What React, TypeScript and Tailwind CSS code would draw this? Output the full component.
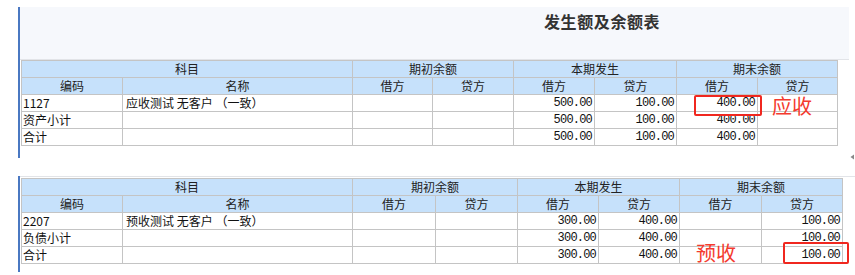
import React from "react";

const cn = "font-['Noto_Sans_CJK_SC',sans-serif]";
const mono = "font-['Liberation_Mono','Noto_Sans_CJK_SC',monospace] text-[10px] tracking-[-0.8px]";

type Row = { code: string; name: string; vals: string[] };

function Table({ cols, rows }: { cols: string; rows: Row[] }) {
  const hd = "bg-[#c6e1fb] flex items-center justify-center text-[12px] leading-none text-[#222]";
  const td = "bg-white flex items-center text-[12px] leading-none text-[#111]";
  return (
    <div className={`grid ${cols} grid-rows-[16px_16px_16px_16px_16px] gap-px bg-[#c4c4c4] p-px w-fit ${cn}`}>
      <div className={`${hd} col-span-2`}>科目</div>
      <div className={`${hd} col-span-2`}>期初余额</div>
      <div className={`${hd} col-span-2`}>本期发生</div>
      <div className={`${hd} col-span-2`}>期末余额</div>
      <div className={hd}>编码</div>
      <div className={hd}>名称</div>
      <div className={hd}>借方</div>
      <div className={hd}>贷方</div>
      <div className={hd}>借方</div>
      <div className={hd}>贷方</div>
      <div className={hd}>借方</div>
      <div className={hd}>贷方</div>
      {rows.map((r, i) => (
        <React.Fragment key={i}>
          <div className={`${td} pl-[1px] ${/^\d+$/.test(r.code) ? "text-[10px]" : ""}`}>{r.code}</div>
          <div className={`${td} pl-[3px]`}>{r.name}</div>
          {r.vals.map((v, j) => (
            <div key={j} className={`${td} justify-end pr-[2px] ${mono}`}>{v}</div>
          ))}
        </React.Fragment>
      ))}
    </div>
  );
}

export default function App() {
  const top: Row[] = [
    { code: "1127", name: "应收测试 无客户 （一致）", vals: ["", "", "500.00", "100.00", "400.00", ""] },
    { code: "资产小计", name: "", vals: ["", "", "500.00", "100.00", "400.00", ""] },
    { code: "合计", name: "", vals: ["", "", "500.00", "100.00", "400.00", ""] },
  ];
  const bottom: Row[] = [
    { code: "2207", name: "预收测试 无客户 （一致）", vals: ["", "", "300.00", "400.00", "", "100.00"] },
    { code: "负债小计", name: "", vals: ["", "", "300.00", "400.00", "", "100.00"] },
    { code: "合计", name: "", vals: ["", "", "300.00", "400.00", "", "100.00"] },
  ];
  return (
    <div className={`relative w-[855px] h-[275px] bg-white overflow-hidden ${cn}`}>
      <div className="flex flex-col pt-[7px] pl-[18px]">
        <div className="flex flex-col border-l-2 border-[#4a78c2] h-[151px]">
          <div className="w-[829px] h-[53px] bg-[#f6f8fc] border-b border-[#e2e4e8] pl-[524px] pt-[2px]">
            <span className="text-[16px] leading-[22px] font-bold text-[#333] tracking-[0.6px]">发生额及余额表</span>
          </div>
          <div className="pl-px">
            <Table cols="grid-cols-[100px_229px_79px_80px_80px_81px_80px_79px]" rows={top} />
          </div>
        </div>
        <div className="mt-[18px] flex flex-col border-l-2 border-[#4a78c2] h-[96px]">
          <div className="w-[836px] h-[2px] border-t border-[#e2e4e8]" />
          <div className="pl-px">
            <Table cols="grid-cols-[100px_229px_82px_81px_80px_80px_81px_80px]" rows={bottom} />
          </div>
        </div>
      </div>

      <div className="absolute left-[694px] top-[95px] w-[68px] h-[21px] border-2 border-[#f0271f] rounded-[2px]" />
      <div className="absolute left-[772px] top-[96px] text-[20px] leading-[20px] text-[#f43a2e]">应收</div>

      <div className="absolute left-[783px] top-[242px] w-[66px] h-[22px] border-2 border-[#f0271f] rounded-[2px]" />
      <div className="absolute left-[696px] top-[243px] text-[20px] leading-[20px] text-[#f43a2e]">预收</div>

      <svg className="absolute left-[850px] top-[154px]" width="5" height="6" viewBox="0 0 5 6">
        <path d="M4 0.5 L0.5 3 L4 5.5 Z" fill="#888" />
      </svg>
    </div>
  );
}
